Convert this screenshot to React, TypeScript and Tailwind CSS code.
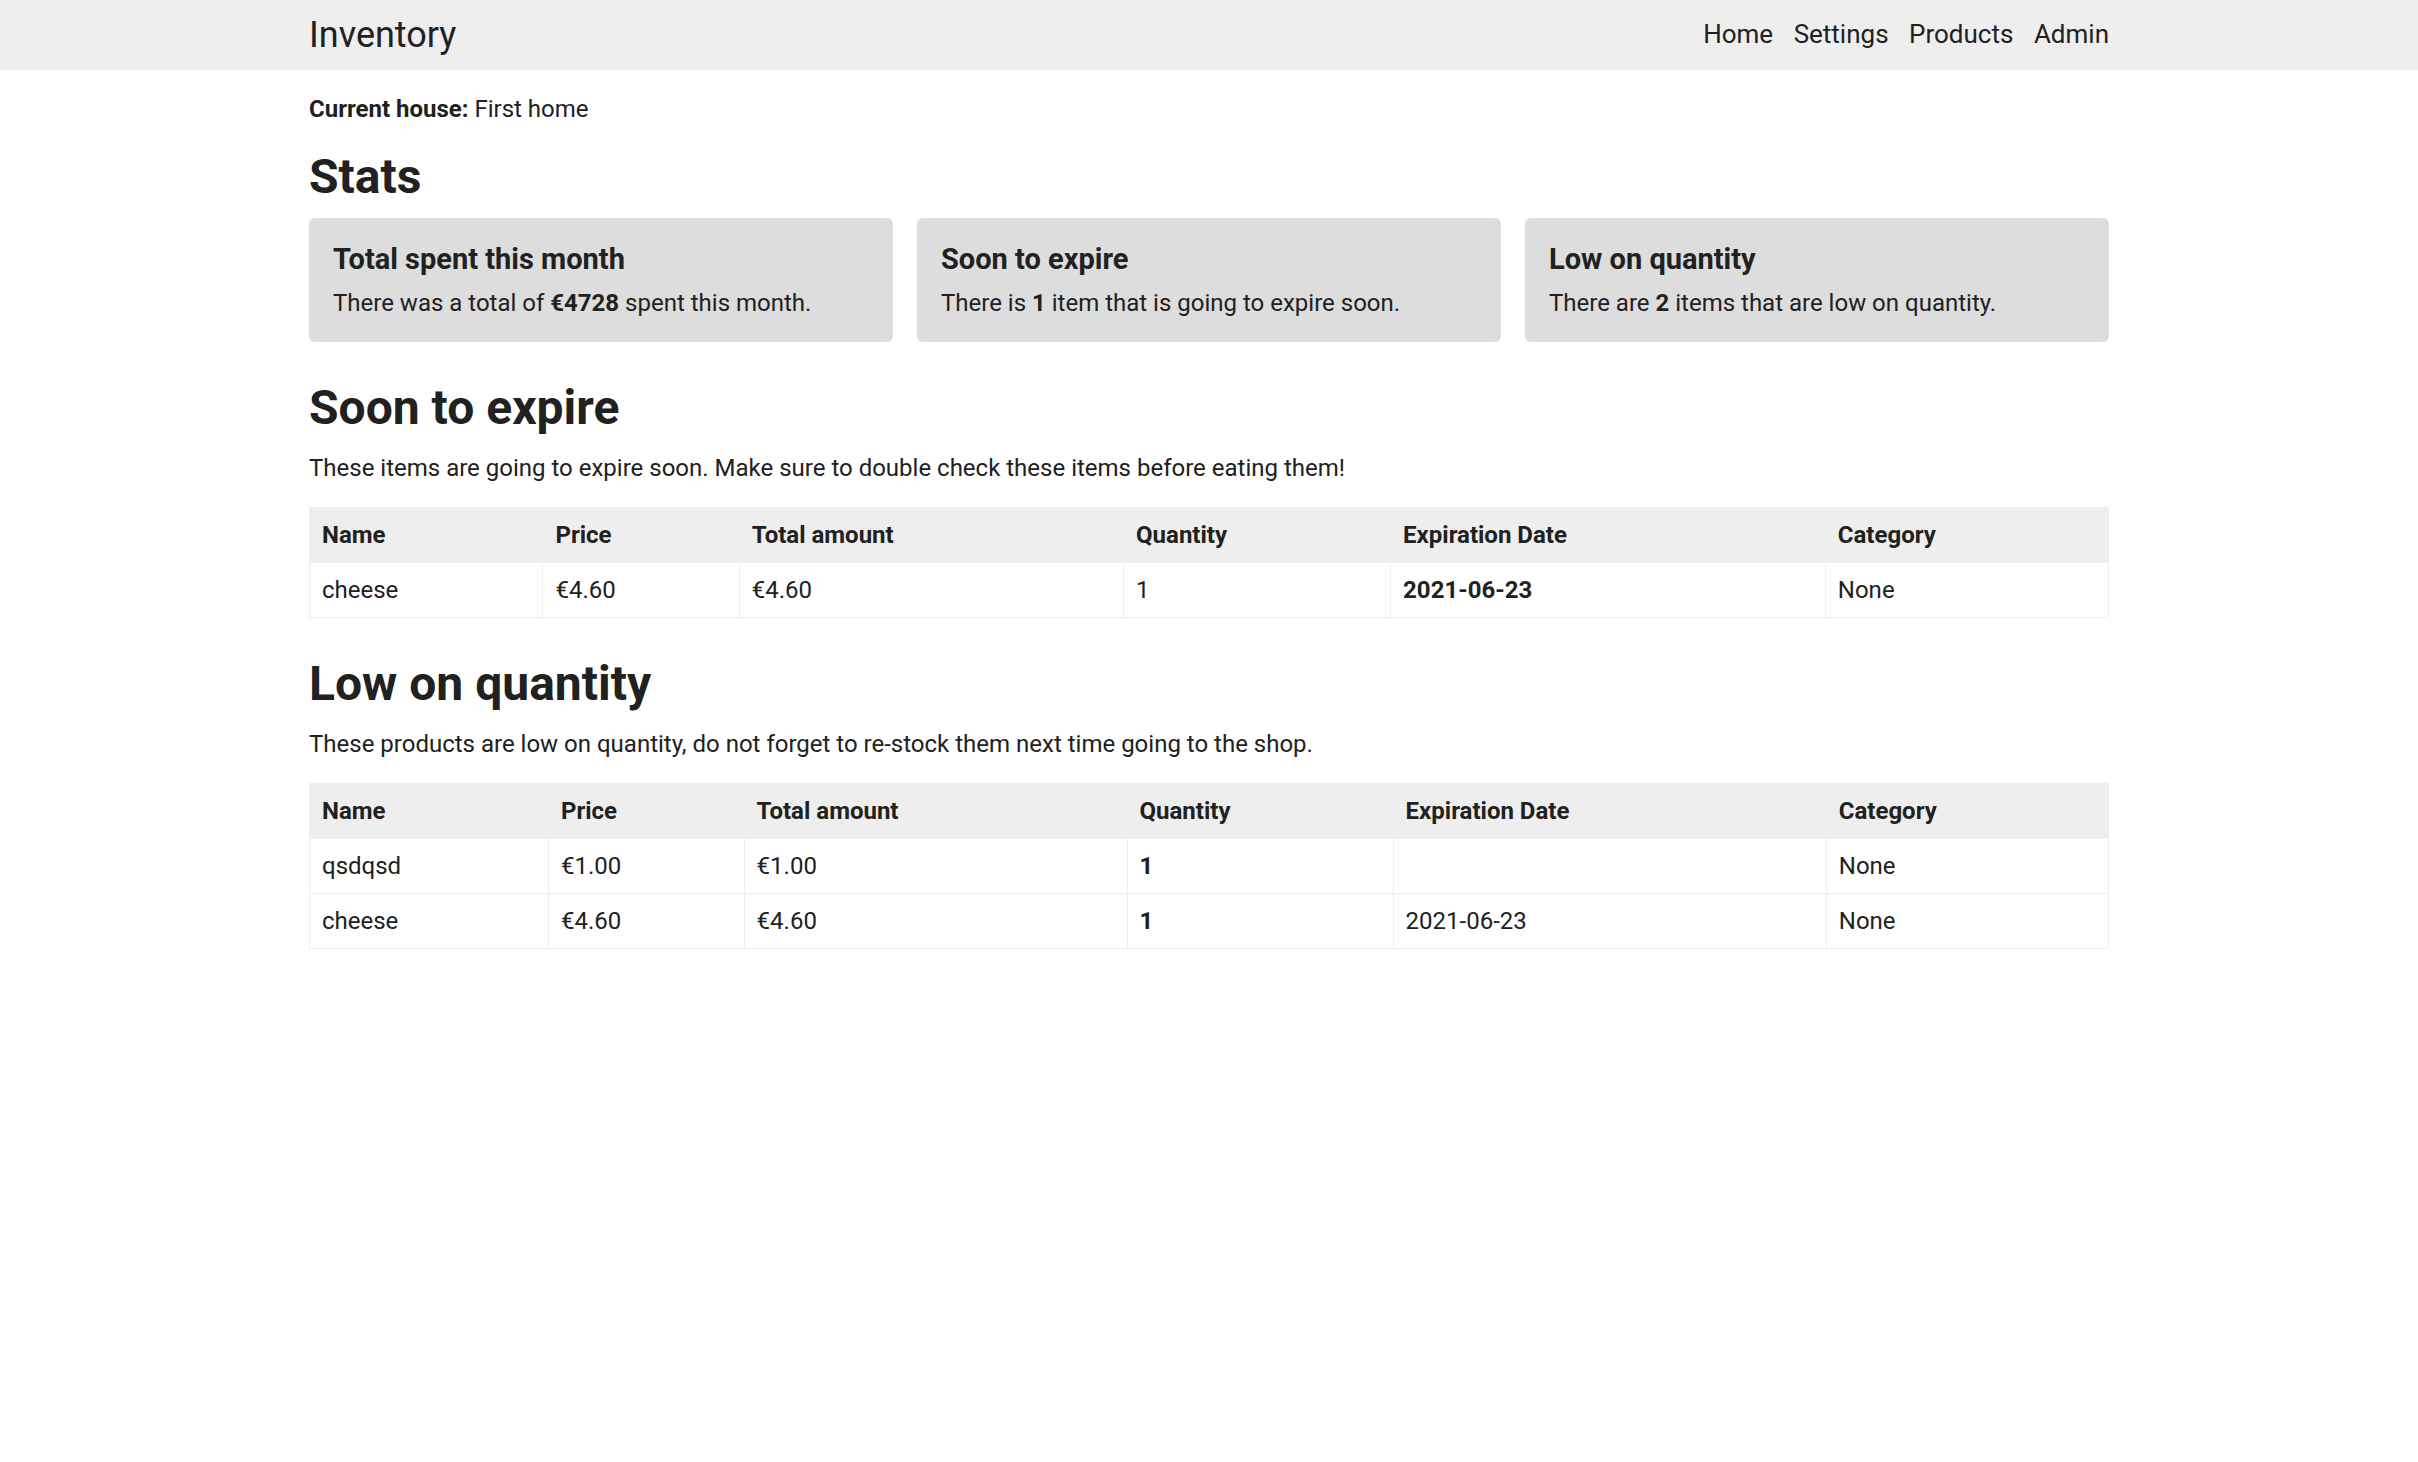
import type { ReactNode } from 'react';

// Inventory dashboard — static mock of the home/stats page.

type Row = {
  name: string;
  price: string;
  total: string;
  quantity: string;
  expires: string;
  category: string;
};

const EXPIRING: Row[] = [
  { name: 'cheese', price: '€4.60', total: '€4.60', quantity: '1', expires: '2021-06-23', category: 'None' },
];

const LOW_STOCK: Row[] = [
  { name: 'qsdqsd', price: '€1.00', total: '€1.00', quantity: '1', expires: '', category: 'None' },
  { name: 'cheese', price: '€4.60', total: '€4.60', quantity: '1', expires: '2021-06-23', category: 'None' },
];

const NAV = ['Home', 'Settings', 'Products', 'Admin'];

export default function App() {
  return (
    <div className="min-h-screen w-full bg-white font-['Roboto',sans-serif] text-[24px] leading-[1.5] text-[#212121]">
      <header className="h-[70px] bg-[#eeeeee]">
        <div className="mx-auto flex h-full w-[1800px] items-center justify-between">
          <span className="text-[36px] leading-[1.5]">Inventory</span>
          <nav className="-mt-[2px] flex items-center gap-[20.5px] text-[26px] leading-[1.5]">
            {NAV.map((item) => (
              <a key={item} href="#" className="text-[#212121]">
                {item}
              </a>
            ))}
          </nav>
        </div>
      </header>

      <main className="mx-auto w-[1800px] pt-[21px] pb-16">
        <p className="mb-[21px]">
          <b className="font-bold">Current house:</b> First home
        </p>

        <h2 className="mb-[12px] text-[48px] font-bold leading-[1.2]">Stats</h2>
        <div className="grid grid-cols-3 gap-[24px]">
          <StatCard title="Total spent this month">
            There was a total of <b className="font-bold">€4728</b> spent this month.
          </StatCard>
          <StatCard title="Soon to expire">
            There is <b className="font-bold">1</b> item that is going to expire soon.
          </StatCard>
          <StatCard title="Low on quantity">
            There are <b className="font-bold">2</b> items that are low on quantity.
          </StatCard>
        </div>

        <Section
          title="Soon to expire"
          blurb="These items are going to expire soon. Make sure to double check these items before eating them!"
        >
          <ItemTable rows={EXPIRING} bold="expires" />
        </Section>

        <Section
          title="Low on quantity"
          blurb="These products are low on quantity, do not forget to re-stock them next time going to the shop."
        >
          <ItemTable rows={LOW_STOCK} bold="quantity" />
        </Section>
      </main>
    </div>
  );
}

function StatCard({ title, children }: { title: string; children: ReactNode }) {
  return (
    <div className="rounded-md bg-[#dddddd] px-[24px] pt-[24px] pb-[21px]">
      <h5 className="mb-[9px] text-[29px] font-bold leading-[1.2]">{title}</h5>
      <p>{children}</p>
    </div>
  );
}

function Section({ title, blurb, children }: { title: string; blurb: string; children: ReactNode }) {
  return (
    <section className="mt-[37px]">
      <h2 className="mb-[13px] text-[48px] font-bold leading-[1.2]">{title}</h2>
      <p className="mb-[21px]">{blurb}</p>
      {children}
    </section>
  );
}

function ItemTable({ rows, bold }: { rows: Row[]; bold: 'expires' | 'quantity' }) {
  const cell = 'border-[1.5px] border-[#eeeeee] px-[12px] pt-[9.5px] pb-[8.5px] text-left align-top';
  return (
    <table className="w-full border-collapse border-[1.5px] border-[#eeeeee]">
      <thead className="bg-[#eeeeee]">
        <tr>
          <th className={`${cell} font-bold`}>Name</th>
          <th className={`${cell} font-bold`}>Price</th>
          <th className={`${cell} font-bold`}>Total amount</th>
          <th className={`${cell} font-bold`}>Quantity</th>
          <th className={`${cell} font-bold`}>Expiration Date</th>
          <th className={`${cell} font-bold`}>Category</th>
        </tr>
      </thead>
      <tbody>
        {rows.map((r, i) => (
          <tr key={i}>
            <td className={cell}>{r.name}</td>
            <td className={cell}>{r.price}</td>
            <td className={cell}>{r.total}</td>
            <td className={`${cell} ${bold === 'quantity' ? 'font-bold' : ''}`}>{r.quantity}</td>
            <td className={`${cell} ${bold === 'expires' ? 'font-bold' : ''}`}>{r.expires}</td>
            <td className={cell}>{r.category}</td>
          </tr>
        ))}
      </tbody>
    </table>
  );
}
